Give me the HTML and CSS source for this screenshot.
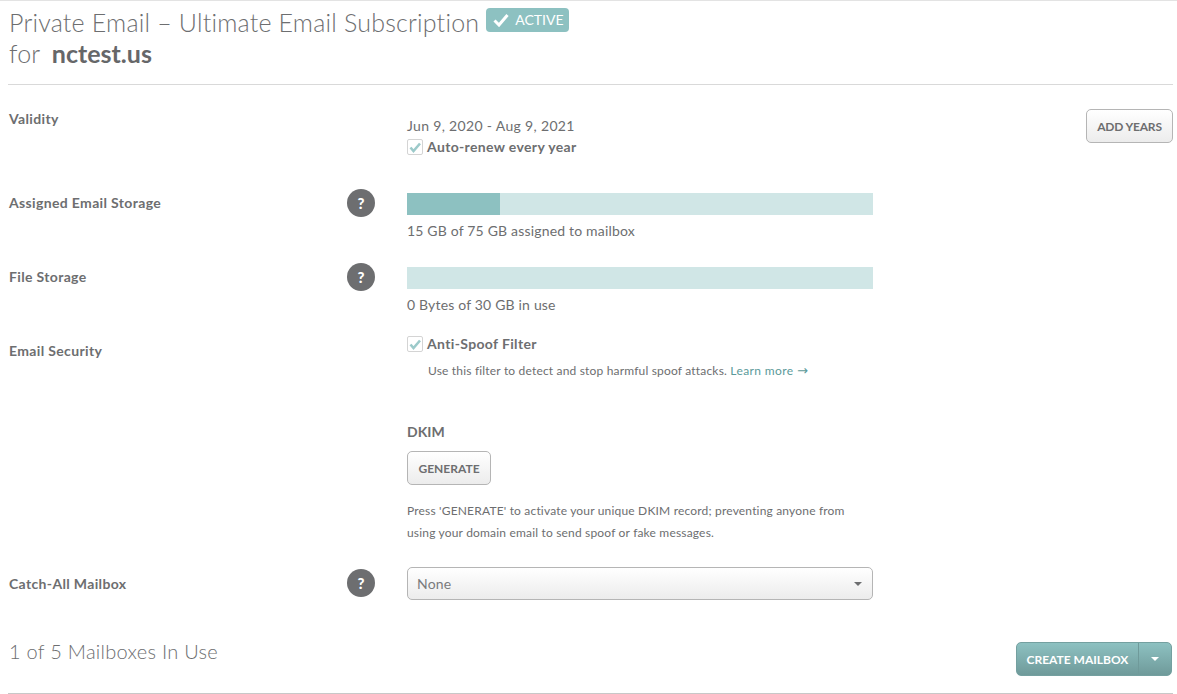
FILE: index.html
```html
<!DOCTYPE html>
<html lang="en">
<head>
<meta charset="utf-8">
<title>Private Email</title>
<link rel="stylesheet" href="styles.css">
</head>
<body>
<main class="page">
  <header class="head">
    <h1 class="title">Private Email – Ultimate Email Subscription <span class="badge"><svg class="badge-check" viewBox="0 0 16 14" width="16" height="14"><path d="M1.5 7.5 L6 12 L14.5 2" fill="none" stroke="#fff" stroke-width="3"/></svg>ACTIVE</span><br>for <strong class="domain">nctest.us</strong></h1>
  </header>

  <section class="row row-validity">
    <div class="label">Validity</div>
    <div class="help-cell"></div>
    <div class="main">
      <div class="dates">Jun 9, 2020 - Aug 9, 2021</div>
      <label class="check"><span class="box"><svg viewBox="0 0 16 16" width="16" height="16"><path d="M3.5 8.5 L6.5 12 L13 4.5" fill="none" stroke="#9ccaca" stroke-width="2.6"/></svg></span>Auto-renew every year</label>
    </div>
    <div class="side"><button class="btn btn-add">ADD YEARS</button></div>
  </section>

  <section class="row row-storage">
    <div class="label">Assigned Email Storage</div>
    <div class="help-cell"><span class="help">?</span></div>
    <div class="main">
      <div class="bar"><div class="fill" style="width:20%"></div></div>
      <div class="note">15 GB of 75 GB assigned to mailbox</div>
    </div>
  </section>

  <section class="row row-files">
    <div class="label">File Storage</div>
    <div class="help-cell"><span class="help">?</span></div>
    <div class="main">
      <div class="bar"></div>
      <div class="note">0 Bytes of 30 GB in use</div>
    </div>
  </section>

  <section class="row row-security">
    <div class="label">Email Security</div>
    <div class="help-cell"></div>
    <div class="main">
      <label class="check"><span class="box"><svg viewBox="0 0 16 16" width="16" height="16"><path d="M3.5 8.5 L6.5 12 L13 4.5" fill="none" stroke="#9ccaca" stroke-width="2.6"/></svg></span>Anti-Spoof Filter</label>
      <p class="hint">Use this filter to detect and stop harmful spoof attacks. <a class="link">Learn more <span class="arrow">→</span></a></p>
      <h2 class="dkim">DKIM</h2>
      <button class="btn btn-gen">GENERATE</button>
      <p class="desc">Press 'GENERATE' to activate your unique DKIM record; preventing anyone from<br>using your domain email to send spoof or fake messages.</p>
    </div>
  </section>

  <section class="row row-catch">
    <div class="label">Catch-All Mailbox</div>
    <div class="help-cell"><span class="help">?</span></div>
    <div class="main">
      <div class="select"><span>None</span><span class="caret"></span></div>
    </div>
  </section>

  <section class="mailboxes">
    <div class="count">1 of 5 Mailboxes In Use</div>
    <div class="split"><button class="split-main">CREATE MAILBOX</button><button class="split-caret"><span class="caret caret-white"></span></button></div>
  </section>
</main>
</body>
</html>
```
FILE: styles.css
```css
* { box-sizing: border-box; }
html, body { margin: 0; padding: 0; }
body {
  background: #fff;
  color: #6d6e70;
  font-family: Lato, "Open Sans", sans-serif;
  font-size: 14px;
  height: 694px;
  overflow: hidden;
}
.page {
  border-top: 1px solid #e3e3e3;
  padding: 0 4px 0 8px;
}
.head {
  height: 84px;
  border-bottom: 1px solid #d9d9d9;
}
.title {
  margin: 0;
  padding: 6px 0 0 1px;
  font-size: 25px;
  font-weight: 300;
  line-height: 31px;
  letter-spacing: .2px;
  color: #6d6e70;
}
.domain { font-weight: 700; margin-left: 5px; color: #666769; letter-spacing: 0; }
.badge {
  display: inline-flex;
  align-items: center;
  gap: 6px;
  height: 24px;
  width: 83px;
  padding-left: 7px;
  margin-left: 0;
  vertical-align: 5px;
  background: #8dc1c1;
  border-radius: 4px;
  color: #fff;
  font-size: 14px;
  font-weight: 400;
  line-height: 24px;
  letter-spacing: 0;
}
.row {
  display: grid;
  grid-template-columns: 339px 60px 466px 1fr;
}
.label { font-size: 14px; font-weight: 700; color: #6d6e70; line-height: 18px; padding-left: 1px; letter-spacing: .35px; }
.help-cell { display: flex; }
.help {
  width: 28px;
  height: 28px;
  border-radius: 50%;
  background: #6d6e70;
  color: #fff;
  font-size: 15px;
  font-weight: 900;
  line-height: 28px;
  text-align: center;
}
.row-validity { padding-top: 25px; height: 108px; }
.dates { margin-top: 7px; line-height: 18px; font-size: 14px; letter-spacing: .33px; }
.check {
  display: flex;
  align-items: center;
  gap: 4px;
  font-weight: 700;
  font-size: 14px;
  line-height: 18px;
  letter-spacing: .35px;
}
.row-validity .check { margin-top: 3px; }
.box {
  display: flex;
  width: 16px;
  height: 16px;
  background: #fff;
  border: 1px solid #d4d4d4;
  border-radius: 2px;
}
.box svg { margin: -1px; flex: none; }
.side { display: flex; justify-content: flex-end; align-items: flex-start; }
.btn {
  font-family: inherit;
  font-size: 12px;
  font-weight: 700;
  color: #6d6e70;
  border: 1px solid #b5b5b5;
  border-radius: 5px;
  background: linear-gradient(#fff, #ececec);
  padding: 0;
}
.btn-add { width: 87px; height: 34px; margin-top: -1px; letter-spacing: -.2px; }
.btn-gen { width: 84px; height: 34px; display: block; margin-top: 10px; }
.row-storage, .row-files { height: 74px; }
.row-storage .label, .row-files .label { padding-top: 1px; }
.row-storage .help, .row-files .help { margin-top: -4px; }
.bar { height: 22px; background: #d0e6e6; margin-top: 0; }
.fill { height: 100%; background: #8dc1c1; }
.note { margin-top: 7px; line-height: 18px; font-size: 14px; letter-spacing: .18px; }
.row-security { height: 226px; }
.row-security .label { padding-top: 1px; }
.row-security .check { margin-top: -6px; }
.hint { margin: 9px 0 0 21px; font-size: 12px; line-height: 18px; letter-spacing: .18px; }
.link { color: #5b9a9a; letter-spacing: .4px; }
.arrow { font-family: "DejaVu Sans", sans-serif; font-size: 13px; line-height: 1; letter-spacing: 0; }
.dkim { margin: 43px 0 0; font-size: 14px; font-weight: 700; line-height: 18px; color: #6d6e70; }
.desc { margin: 15px 0 0; font-size: 12px; line-height: 22px; letter-spacing: .18px; }
.row-catch { height: 42px; }
.row-catch .label { padding-top: 8px; }
.row-catch .help { margin-top: 2px; }
.select {
  height: 33px;
  display: flex;
  align-items: center;
  justify-content: space-between;
  padding: 0 10px 0 9px;
  border: 1px solid #b5b5b5;
  border-radius: 5px;
  background: linear-gradient(#fff, #ececec);
  font-size: 14px;
  color: #7a7b7d;
  letter-spacing: .2px;
}
.caret {
  width: 0;
  height: 0;
  border-left: 4px solid transparent;
  border-right: 4px solid transparent;
  border-top: 4px solid #6d6e70;
}
.caret-white { display: block; margin: 0 auto; border-top-color: #fff; }
.mailboxes {
  display: flex;
  justify-content: space-between;
  align-items: flex-start;
  margin-top: 33px;
  height: 52px;
  border-bottom: 1px solid #c8c8c8;
}
.count { font-size: 20px; font-weight: 300; line-height: 24px; margin-top: -3px; padding-left: 1px; letter-spacing: .27px; }
.split {
  display: flex;
  height: 34px;
  width: 156px;
  margin-right: 1px;
  border: 1px solid #74a0a0;
  border-radius: 5px;
  background: linear-gradient(#8dc1c1, #6f9a9a);
  overflow: hidden;
}
.split button {
  background: none;
  border: 0;
  padding: 0;
  height: 100%;
  font-family: inherit;
  color: #fff;
}
.split-main { width: 121px; font-size: 12px; font-weight: 700; }
.split-caret { flex: 1; border-left: 1px solid #6f9a9a !important; }
```
